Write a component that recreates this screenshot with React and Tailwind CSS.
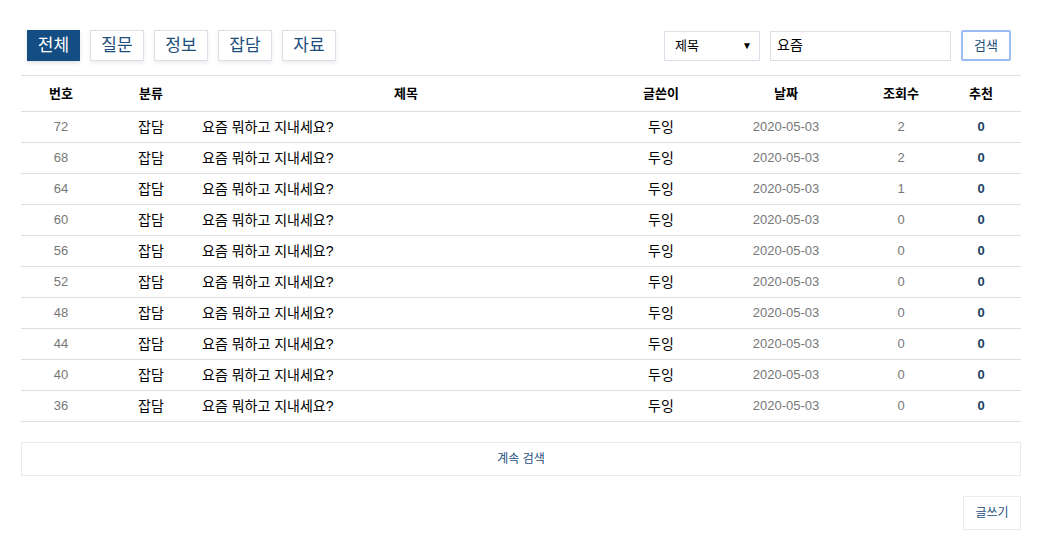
const tabs = ["전체", "질문", "정보", "잡담", "자료"];

const rows = [
  { no: 72, views: 2 },
  { no: 68, views: 2 },
  { no: 64, views: 1 },
  { no: 60, views: 0 },
  { no: 56, views: 0 },
  { no: 52, views: 0 },
  { no: 48, views: 0 },
  { no: 44, views: 0 },
  { no: 40, views: 0 },
  { no: 36, views: 0 },
];

export default function App() {
  return (
    <div className="w-[1044px] h-[555px] bg-white font-['Liberation_Sans','Noto_Sans_CJK_KR',sans-serif] text-[13px] text-black">
      <div className="pl-[21px] pr-[23px] pt-[30px]">
        <div className="flex items-center justify-between h-[31px]">
          <div className="flex gap-[10px] pl-[6px]">
            {tabs.map((t, i) => (
              <button
                key={t}
                className={
                  i === 0
                    ? "w-[53px] h-[31px] bg-[#134d82] border border-[#134d82] text-white text-[17px] shadow-[0_2px_4px_rgba(0,0,0,0.12)]"
                    : "w-[54px] h-[31px] bg-white border border-[#dcdfe8] text-[#1d4f7c] text-[17px] shadow-[0_2px_4px_rgba(0,0,0,0.08)]"
                }
              >
                {t}
              </button>
            ))}
          </div>
          <div className="flex items-center mr-[10px]">
            <div className="w-[96px] h-[30px] border border-[#dcdfe8] flex items-center justify-between pl-[10px] pr-[7px]">
              <span className="text-[13px]">제목</span>
              <span className="text-[10px]">▼</span>
            </div>
            <div className="w-[181px] h-[30px] border border-[#dcdfe8] ml-[10px] flex items-center pl-[6px] text-[14px]">
              요즘
            </div>
            <button className="w-[50px] h-[31px] ml-[10px] border-2 border-[#9bbcf3] rounded-[2px] text-[13px] text-[#1d4f7c]">
              검색
            </button>
          </div>
        </div>

        <table className="w-[1000px] mt-[14px] border-collapse table-fixed">
          <colgroup>
            <col className="w-[80px]" />
            <col className="w-[100px]" />
            <col className="w-[410px]" />
            <col className="w-[100px]" />
            <col className="w-[150px]" />
            <col className="w-[80px]" />
            <col className="w-[80px]" />
          </colgroup>
          <thead>
            <tr className="h-[36px] border-y border-[#dddde6] font-bold">
              <th>번호</th>
              <th>분류</th>
              <th>제목</th>
              <th>글쓴이</th>
              <th>날짜</th>
              <th>조회수</th>
              <th>추천</th>
            </tr>
          </thead>
          <tbody>
            {rows.map((r) => (
              <tr key={r.no} className="h-[31px] border-b border-[#dddde6] text-center">
                <td className="text-[#777]">{r.no}</td>
                <td className="text-[14px]">잡담</td>
                <td className="text-left pl-[1px] text-[14px]">요즘 뭐하고 지내세요?</td>
                <td className="text-[14px]">두잉</td>
                <td className="text-[#777]">2020-05-03</td>
                <td className="text-[#777]">{r.views}</td>
                <td className="font-bold text-[#1b3f66]">0</td>
              </tr>
            ))}
          </tbody>
        </table>

        <div className="mt-[20px] h-[34px] border border-[#eaeaea] flex items-center justify-center text-[12px] text-[#1d4f7c] w-[1000px]">
          계속 검색
        </div>

        <div className="flex justify-end w-[1000px] mt-[20px]">
          <button className="w-[58px] h-[34px] border border-[#eaeaea] text-[12px] text-[#1d4f7c]">
            글쓰기
          </button>
        </div>
      </div>
    </div>
  );
}
